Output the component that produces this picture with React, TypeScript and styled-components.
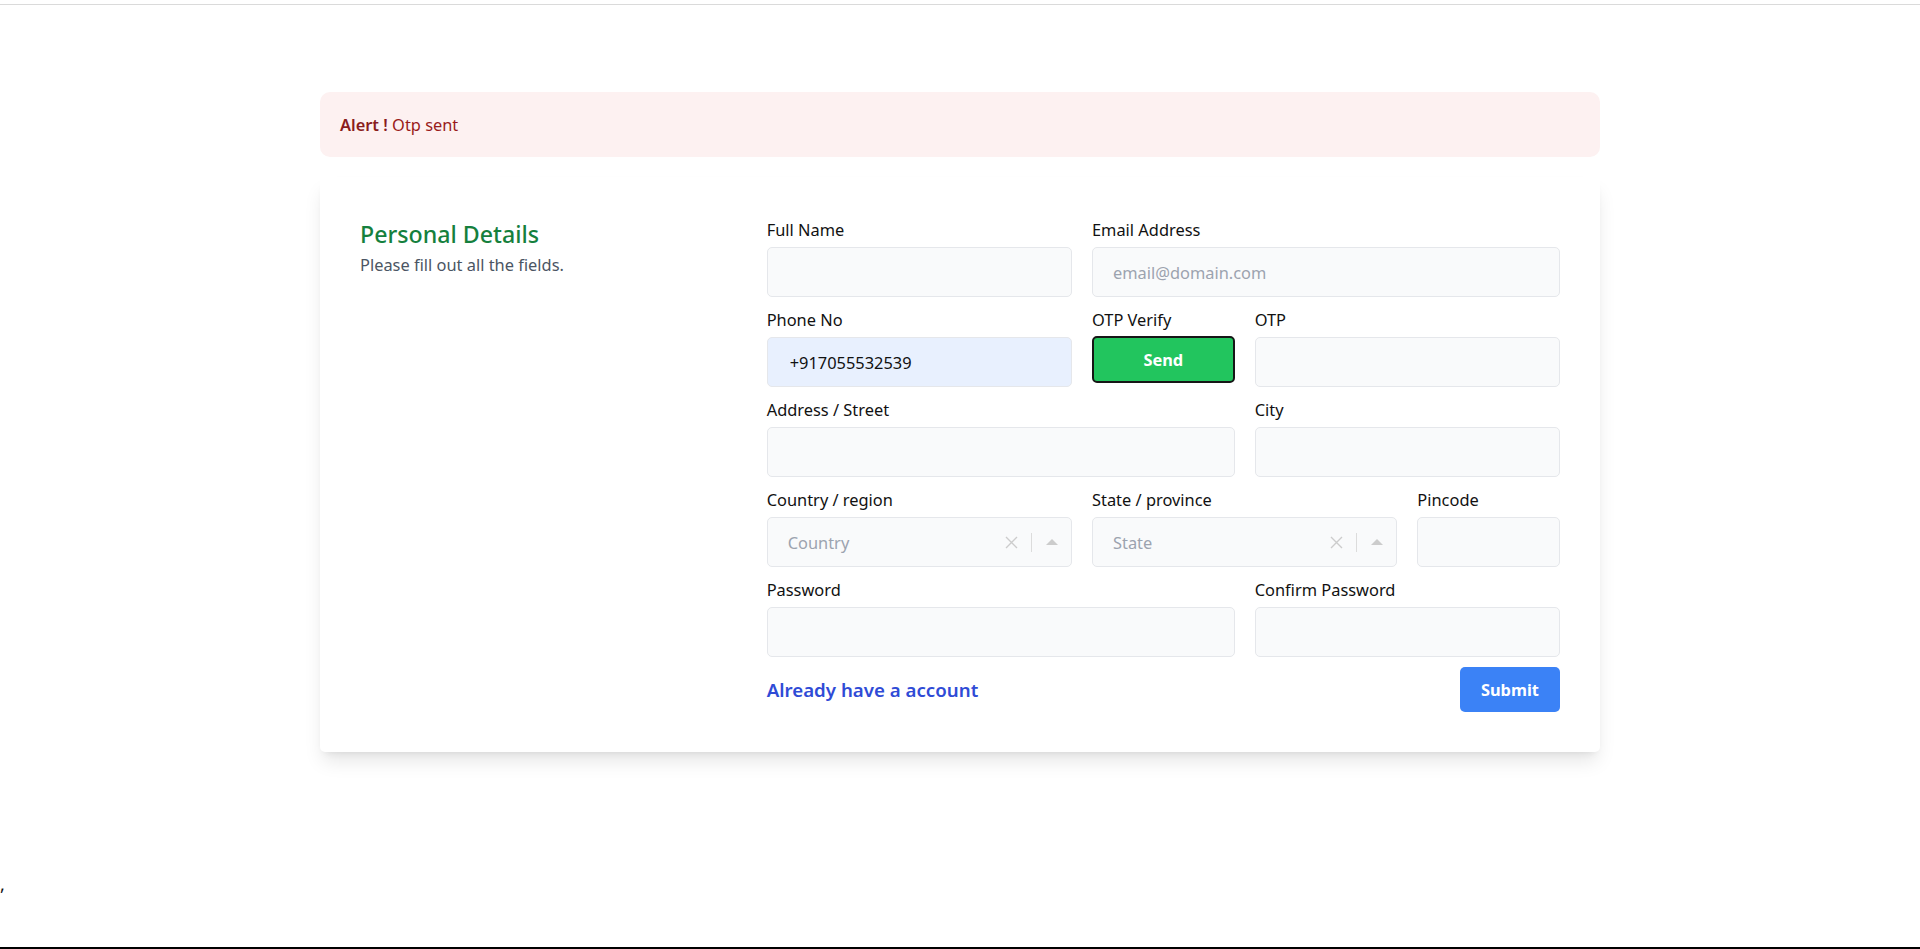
import React from "react";
import styled, { createGlobalStyle } from "styled-components";

const GlobalStyle = createGlobalStyle`
  html, body {
    margin: 0;
    padding: 0;
    background: #ffffff;
    font-family: "Noto Sans", "Open Sans", sans-serif;
    color: #111827;
  }
  *, *::before, *::after { box-sizing: border-box; }
  input::placeholder { color: #9ca3af; opacity: 1; }
`;

const Page = styled.div`
  height: 949px;
  display: flex;
  flex-direction: column;
  overflow: hidden;
`;

const TopBar = styled.div`
  height: 5px;
  flex: none;
  border-bottom: 1px solid #dadada;
`;

const Main = styled.main`
  flex: none;
  padding: 87px 0 120px;
`;

const Container = styled.div`
  width: 1280px;
  margin: 0 auto;
`;

const Alert = styled.div`
  background: #fdf1f1;
  border-radius: 10px;
  padding: 20px;
  font-size: 16.4px;
  line-height: 25px;
  color: #991b1b;
  margin-bottom: 20px;
`;

const AlertStrong = styled.span`
  font-weight: 600;
  color: #8a1c1c;
`;

const Card = styled.div`
  background: #ffffff;
  border-radius: 5px;
  padding: 40px;
  box-shadow: 0 12.5px 18.75px -3.75px rgba(0, 0, 0, 0.1),
    0 5px 7.5px -5px rgba(0, 0, 0, 0.1);
  display: grid;
  grid-template-columns: repeat(3, minmax(0, 1fr));
  column-gap: 20px;
`;

const Intro = styled.div`
  grid-column: span 1;
`;

const Heading = styled.p`
  margin: 0;
  font-size: 23.2px;
  line-height: 35px;
  font-weight: 500;
  color: #15803d;
`;

const SubText = styled.p`
  margin: 0;
  font-size: 16.4px;
  line-height: 25px;
  color: #4b5563;
`;

const FormGrid = styled.div`
  grid-column: span 2;
  display: grid;
  grid-template-columns: repeat(5, minmax(0, 1fr));
  column-gap: 20px;
  row-gap: 10px;
  font-size: 16.4px;
`;

const Field = styled.div<{ $span: number }>`
  grid-column: span ${(p) => p.$span};
  display: flex;
  flex-direction: column;
`;

const Label = styled.label`
  display: block;
  font-size: 16.4px;
  line-height: 25px;
  color: #111111;
`;

const Input = styled.input<{ $autofill?: boolean }>`
  display: block;
  margin-top: 5px;
  height: 50px;
  width: 100%;
  border: 1px solid #e5e7eb;
  border-radius: 5px;
  padding: 0 ${(p) => (p.$autofill ? "22px" : "20px")};
  background: ${(p) => (p.$autofill ? "#e8f0fe" : "#f9fafb")};
  font-family: inherit;
  font-size: 16.4px;
  color: #111111;
  outline: none;
`;

const SendButton = styled.button`
  margin-top: 4px;
  height: 47px;
  width: 100%;
  background: #22c55e;
  border: 2px solid #161616;
  border-radius: 5px;
  color: #ffffff;
  font-family: inherit;
  font-weight: 700;
  font-size: 16.4px;
`;

const SelectControl = styled.div`
  margin-top: 5px;
  height: 50px;
  width: 100%;
  border: 1px solid #e5e7eb;
  border-radius: 5px;
  background: #f9fafb;
  display: flex;
  align-items: center;
`;

const SelectValue = styled.div`
  flex: 1;
  padding-left: 20px;
  color: #9ca3af;
  font-size: 16.4px;
  line-height: 25px;
`;

const Indicators = styled.div`
  display: flex;
  align-items: center;
  height: 100%;
`;

const ClearIcon = styled.span`
  display: flex;
  margin-right: 13px;
  color: #cccccc;
`;

const Separator = styled.span`
  width: 1px;
  height: 19px;
  background: #dcdcdc;
`;

const DropIcon = styled.span`
  display: flex;
  padding: 0 13px 0 14px;
  color: #cccccc;
`;

const Actions = styled.div`
  grid-column: span 5;
  display: flex;
  align-items: center;
  justify-content: space-between;
`;

const LoginLink = styled.a`
  font-size: 18.7px;
  line-height: 28px;
  font-weight: 600;
  color: #2f4bd6;
  text-decoration: none;
`;

const SubmitButton = styled.button`
  height: 45px;
  padding: 0 21px;
  background: #3b82f6;
  border: none;
  border-radius: 5px;
  color: #ffffff;
  font-family: inherit;
  font-weight: 700;
  font-size: 16.4px;
`;

const Stray = styled.div`
  flex: none;
  font-size: 18px;
  line-height: 25px;
  height: 25px;
  color: #111111;
`;

const BottomRule = styled.div`
  margin-top: auto;
  height: 2px;
  flex: none;
  background: #000000;
`;

const Cross = () => (
  <svg width="13" height="13" viewBox="0 0 13 13" aria-hidden="true">
    <path d="M1 1 L12 12 M12 1 L1 12" stroke="currentColor" strokeWidth="1.4" fill="none" />
  </svg>
);

const Caret = () => (
  <svg width="12" height="6" viewBox="0 0 12 6" aria-hidden="true">
    <polygon points="0,6 6,0 12,6" fill="currentColor" />
  </svg>
);

const Select = ({ placeholder }: { placeholder: string }) => (
  <SelectControl>
    <SelectValue>{placeholder}</SelectValue>
    <Indicators>
      <ClearIcon>
        <Cross />
      </ClearIcon>
      <Separator />
      <DropIcon>
        <Caret />
      </DropIcon>
    </Indicators>
  </SelectControl>
);

export default function App() {
  return (
    <>
      <GlobalStyle />
      <Page>
        <TopBar />
        <Main>
          <Container>
            <Alert>
              <AlertStrong>Alert !</AlertStrong> Otp sent
            </Alert>
            <Card>
              <Intro>
                <Heading>Personal Details</Heading>
                <SubText>Please fill out all the fields.</SubText>
              </Intro>
              <FormGrid>
                <Field $span={2}>
                  <Label>Full Name</Label>
                  <Input type="text" />
                </Field>
                <Field $span={3}>
                  <Label>Email Address</Label>
                  <Input type="text" placeholder="email@domain.com" />
                </Field>
                <Field $span={2}>
                  <Label>Phone No</Label>
                  <Input type="text" $autofill defaultValue="+917055532539" />
                </Field>
                <Field $span={1}>
                  <Label>OTP Verify</Label>
                  <SendButton type="button">Send</SendButton>
                </Field>
                <Field $span={2}>
                  <Label>OTP</Label>
                  <Input type="text" />
                </Field>
                <Field $span={3}>
                  <Label>Address / Street</Label>
                  <Input type="text" />
                </Field>
                <Field $span={2}>
                  <Label>City</Label>
                  <Input type="text" />
                </Field>
                <Field $span={2}>
                  <Label>Country / region</Label>
                  <Select placeholder="Country" />
                </Field>
                <Field $span={2}>
                  <Label>State / province</Label>
                  <Select placeholder="State" />
                </Field>
                <Field $span={1}>
                  <Label>Pincode</Label>
                  <Input type="text" />
                </Field>
                <Field $span={3}>
                  <Label>Password</Label>
                  <Input type="password" />
                </Field>
                <Field $span={2}>
                  <Label>Confirm Password</Label>
                  <Input type="password" />
                </Field>
                <Actions>
                  <LoginLink href="#">Already have a account</LoginLink>
                  <SubmitButton type="button">Submit</SubmitButton>
                </Actions>
              </FormGrid>
            </Card>
          </Container>
        </Main>
        <Stray>,</Stray>
        <BottomRule />
      </Page>
    </>
  );
}
